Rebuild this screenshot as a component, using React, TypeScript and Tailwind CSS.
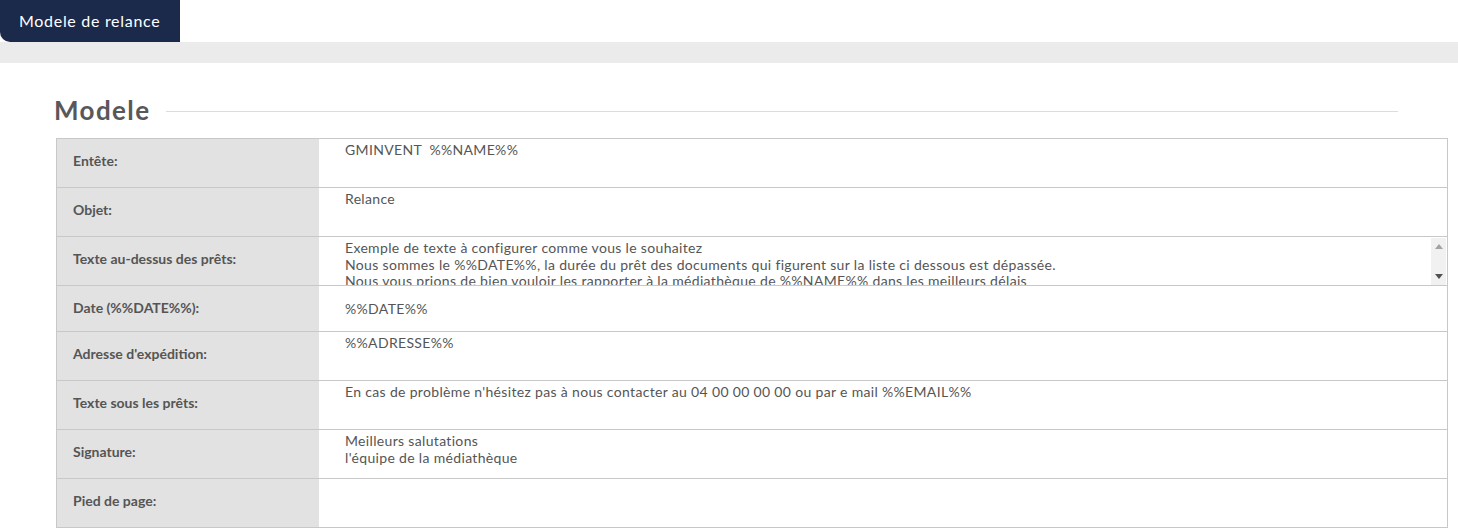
import React from "react";

const font = { fontFamily: "Lato, 'Noto Sans', sans-serif" };

type Row = { label: string; lines: string[]; h: string; kind?: "input" | "scroll" };

const rows: Row[] = [
  { label: "Entête:", lines: ["GMINVENT  %%NAME%%"], h: "h-[49px]" },
  { label: "Objet:", lines: ["Relance"], h: "h-[49px]" },
  {
    label: "Texte au-dessus des prêts:",
    lines: [
      "Exemple de texte à configurer comme vous le souhaitez",
      "Nous sommes le %%DATE%%, la durée du prêt des documents qui figurent sur la liste ci dessous est dépassée.",
      "Nous vous prions de bien vouloir les rapporter à la médiathèque de %%NAME%% dans les meilleurs délais",
    ],
    h: "h-[49px]",
    kind: "scroll",
  },
  { label: "Date (%%DATE%%):", lines: ["%%DATE%%"], h: "h-[46px]", kind: "input" },
  { label: "Adresse d'expédition:", lines: ["%%ADRESSE%%"], h: "h-[49px]" },
  {
    label: "Texte sous les prêts:",
    lines: ["En cas de problème n'hésitez pas à nous contacter au 04 00 00 00 00 ou par e mail %%EMAIL%%"],
    h: "h-[49px]",
  },
  { label: "Signature:", lines: ["Meilleurs salutations", "l'équipe de la médiathèque"], h: "h-[49px]" },
  { label: "Pied de page:", lines: [], h: "h-[49px]" },
];

export default function App() {
  return (
    <div className="w-[1458px] h-[532px] bg-white overflow-hidden" style={font}>
      <div className="flex">
        <div className="h-[42px] w-[180px] bg-[#1b294a] rounded-bl-[10px] flex items-center pl-[19px] text-white text-[16px] tracking-[0.7px]">
          Modele de relance
        </div>
      </div>
      <div className="h-[21px] bg-[#ebebeb]" />
      <div className="flex items-center pl-[54px] pr-[60px] mt-[29px] h-[36px]">
        <h2 className="text-[26px] font-bold text-[#58585a] leading-none tracking-[1.4px]">Modele</h2>
        <div className="flex-1 ml-[15px] h-px bg-[#dcdcdc] mt-[3px]" />
      </div>
      <div className="ml-[56px] w-[1392px] mt-[10px] border-x border-b border-[#c8c8c8]">
        {rows.map((r, i) => (
          <div key={i} className={`flex ${r.h} border-t border-[#c8c8c8]`}>
            <div
              className={`w-[262px] bg-[#e2e2e2] flex items-center pl-[16px] text-[14px] font-bold text-[#555555] ${
                r.kind === "input" ? "pb-[2px]" : "pb-[5px]"
              }`}
            >
              {r.label}
            </div>
            <div className="flex-1 relative overflow-hidden text-[14px] text-[#555555] tracking-[0.33px]">
              {r.kind === "input" ? (
                <div className="h-full flex items-center pl-[26px]">{r.lines[0]}</div>
              ) : (
                <div className="pl-[26px] pt-[3px] leading-[16.5px]">
                  {r.lines.map((l, j) => (
                    <div key={j} className="whitespace-pre">{l}</div>
                  ))}
                </div>
              )}
              {r.kind === "scroll" && (
                <div className="absolute right-[1px] top-[1px] bottom-[0px] w-[15px] bg-[#f1f1f1] flex flex-col items-center justify-between py-[6px]">
                  <svg width="8" height="5" viewBox="0 0 8 5">
                    <path d="M0 5 L4 0 L8 5 Z" fill="#a3a3a3" />
                  </svg>
                  <svg width="8" height="5" viewBox="0 0 8 5">
                    <path d="M0 0 L8 0 L4 5 Z" fill="#505050" />
                  </svg>
                </div>
              )}
            </div>
          </div>
        ))}
      </div>
    </div>
  );
}
